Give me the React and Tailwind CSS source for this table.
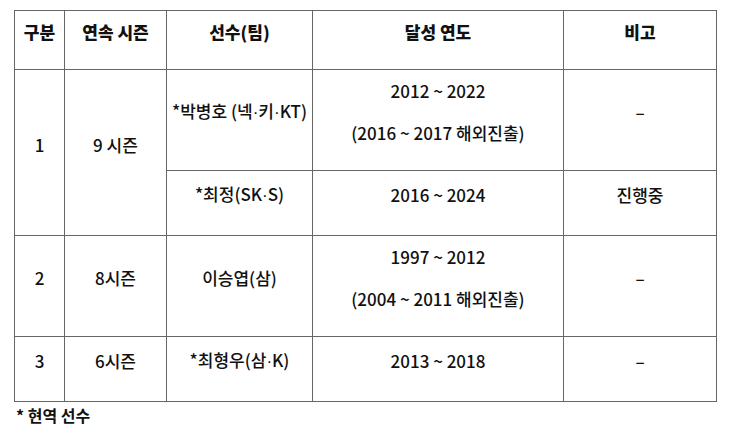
import React from "react";

// narrow middle dot, the CJK one is full width
const Dot = () => <span style={{fontFamily: '"Liberation Sans", sans-serif'}}>·</span>

const rows = [
    {no: "1", season: "9 시즌", player: <>*박병호 (넥<Dot/>키<Dot/>KT)</>, years: ["2012 ~ 2022", "(2016 ~ 2017 해외진출)"], note: "–", span: 2},
    {player: <>*최정(SK<Dot/>S)</>, years: ["2016 ~ 2024"], note: "진행중", sub: true},
    {no: "2", season: "8시즌", player: "이승엽(삼)", years: ["1997 ~ 2012", "(2004 ~ 2011 해외진출)"], note: "–"},
    {no: "3", season: "6시즌", player: <>*최형우(삼<Dot/>K)</>, years: ["2013 ~ 2018"], note: "–"},
]

const cell = "border border-[#666] px-1 py-[8px] text-center align-middle whitespace-nowrap"
const para = "mb-[17px] leading-[25px]"

export default function App() {
    return (
        <div className="w-[734px] h-[434px] bg-white pt-[10px] pl-[14px] text-[#111] text-[17px] font-medium"
             style={{fontFamily: '"Noto Sans CJK KR", "Noto Sans", sans-serif'}}>
            <table className="border-collapse w-[702px] table-fixed">
                <colgroup>
                    <col className="w-[50px]"/>
                    <col className="w-[102px]"/>
                    <col className="w-[146px]"/>
                    <col className="w-[251px]"/>
                    <col className="w-[153px]"/>
                </colgroup>
                <thead>
                <tr className="h-[59px]">
                    {["구분", "연속 시즌", "선수(팀)", "달성 연도", "비고"].map((h) => (
                        <th key={h} className={cell + " font-black"}>
                            <p className={para}>{h}</p>
                        </th>
                    ))}
                </tr>
                </thead>
                <tbody>
                {rows.map((r, i) => (
                    <tr key={i} className={r.years.length > 1 ? "h-[101px]" : "h-[65px]"}>
                        {!r.sub && (
                            <td rowSpan={r.span || 1} className={cell}><p className={para}>{r.no}</p></td>
                        )}
                        {!r.sub && (
                            <td rowSpan={r.span || 1} className={cell}><p className={para}>{r.season}</p></td>
                        )}
                        <td className={cell}><p className={para}>{r.player}</p></td>
                        <td className={cell}>
                            {r.years.map((y) => (
                                <p key={y} className={para}>{y}</p>
                            ))}
                        </td>
                        <td className={cell}><p className={para}>{r.note}</p></td>
                    </tr>
                ))}
                </tbody>
            </table>
            <p className="mt-[2px] pl-[2px] text-[16px] font-bold leading-[22px]">* 현역 선수</p>
        </div>
    )
}
